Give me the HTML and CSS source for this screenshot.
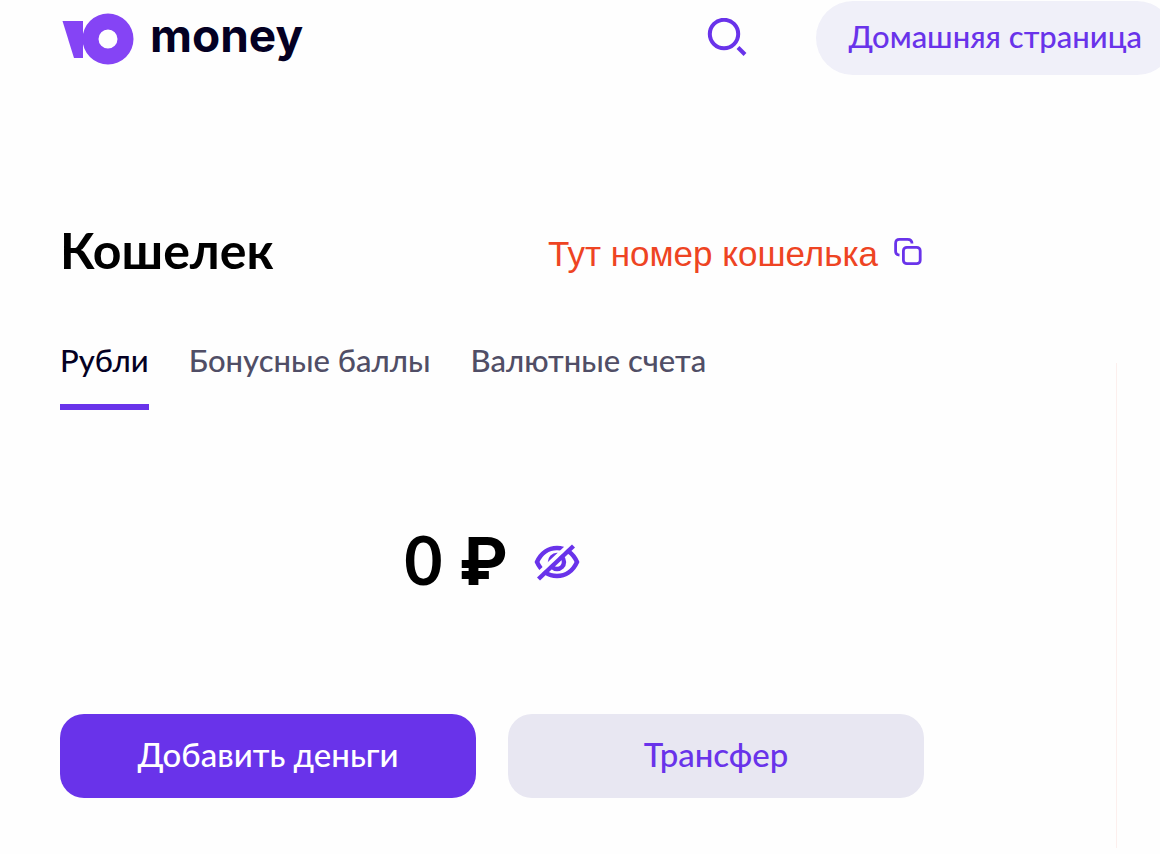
FILE: index.html
```html
<!DOCTYPE html>
<html lang="ru">
<head>
  <meta charset="UTF-8">
  <meta name="viewport" content="width=device-width, initial-scale=1.0">
  <title>Кошелек</title>
  <link rel="stylesheet" href="styles.css">
</head>
<body>

  <header class="header">
    <a class="logo" href="#">
      <svg class="logo-mark" viewBox="0 0 72 52" aria-hidden="true">
        <path d="M0.5 8H21V45H12Z" fill="#8544f5"/>
        <path fill-rule="evenodd" d="M46 0.5a25.5 25.5 0 1 1 0 51a25.5 25.5 0 1 1 0-51zM46 16.5a9.5 9.5 0 1 0 0 19a9.5 9.5 0 1 0 0-19z" fill="#8544f5"/>
      </svg>
      <span class="logo-text">money</span>
    </a>
    <button class="icon-button search" type="button" aria-label="Поиск">
      <svg width="40" height="40" viewBox="0 0 40 40" fill="none" stroke="#6933ea" stroke-width="4">
        <circle cx="17" cy="16" r="14.2"/>
        <path d="M31 29.5L38 36.5"/>
      </svg>
    </button>
    <a class="home-link" href="#">Домашняя страница</a>
  </header>

  <div class="page">
    <main class="wallet">
      <div class="wallet-head">
        <h1 class="wallet-title">Кошелек</h1>
        <div class="wallet-number">
          <span class="number-text">Тут номер кошелька</span>
          <button class="icon-button copy" type="button" aria-label="Скопировать">
            <svg width="30" height="30" viewBox="0 0 30 30" fill="none" stroke="#6933ea" stroke-width="2.8">
              <rect x="9.4" y="10.3" width="16.8" height="16.4" rx="3.5"/>
              <path d="M5.5 18.2C3 18 1.6 16.5 1.6 14V6.5C1.6 3.5 3 2.3 5.5 2.3H13.5C16.5 2.3 18 3.5 18 6.5"/>
            </svg>
          </button>
        </div>
      </div>

      <nav class="tabs">
        <a class="tab active" href="#">Рубли</a>
        <a class="tab" href="#">Бонусные баллы</a>
        <a class="tab" href="#">Валютные счета</a>
      </nav>

      <div class="balance">
        <span class="balance-sum">0 ₽</span>
        <button class="icon-button eye" type="button" aria-label="Скрыть баланс">
          <svg width="46" height="38" viewBox="0 0 46 38" fill="none" stroke="#6933ea" stroke-width="4.4">
            <path d="M3 19C7 10 14.5 5 23 5S39 10 43 19C39 28 31.5 33 23 33S7 28 3 19Z"/>
            <circle cx="23" cy="19" r="7"/>
            <path d="M1.5 33.5L36.5 0.5" stroke="#fefefe" stroke-width="4"/>
            <path d="M4.5 36L39.5 3"/>
          </svg>
        </button>
      </div>

      <div class="actions">
        <button class="button button-primary" type="button">Добавить деньги</button>
        <button class="button button-secondary" type="button">Трансфер</button>
      </div>
    </main>
    <aside class="side"></aside>
  </div>

</body>
</html>
```
FILE: styles.css
```css
* {
  box-sizing: border-box;
}

body {
  margin: 0;
  font-family: Lato, Inter, "Liberation Sans", sans-serif;
  color: #000;
  background-color: #fefefe;
  overflow-x: hidden;
}

.header {
  display: flex;
  align-items: center;
  padding: 1px 0 0 62px;
  margin-right: -14px;
}

.logo {
  display: flex;
  align-items: center;
  gap: 16px;
  margin-right: auto;
  padding-top: 2px;
  color: #040023;
  text-decoration: none;
}

.logo-mark {
  width: 72px;
  height: 52px;
}

.logo-text {
  padding-bottom: 8px;
  font-family: Inter, "Liberation Sans", sans-serif;
  font-size: 46px;
  font-weight: 700;
  line-height: 60px;
}

.icon-button {
  display: flex;
  padding: 0;
  border: none;
  background: none;
  cursor: pointer;
}

.search {
  margin-right: 69px;
}

.home-link {
  flex: none;
  padding: 0 32px 4px;
  border-radius: 37px;
  font-size: 31px;
  font-weight: 500;
  line-height: 70px;
  color: #6933ea;
  background-color: #f0f0f9;
  text-decoration: none;
  white-space: nowrap;
}

.page {
  display: flex;
  padding: 144px 0 56px 60px;
}

.wallet {
  flex: 1;
  margin-right: 192px;
}

.wallet-head {
  display: flex;
  align-items: center;
  justify-content: space-between;
}

.wallet-title {
  margin: 0;
  padding-bottom: 2px;
  font-size: 50px;
  font-weight: 700;
  line-height: 62px;
}

.wallet-number {
  display: flex;
  align-items: center;
  gap: 16px;
}

.number-text {
  padding-top: 6px;
  font-family: "Liberation Sans", Arial, sans-serif;
  font-size: 35px;
  line-height: 48px;
  color: #ee4423;
}

.copy {
  padding-top: 2px;
}

.tabs {
  display: flex;
  gap: 40px;
  margin-top: 57px;
}

.tab {
  padding-bottom: 24px;
  border-bottom: 6px solid transparent;
  font-size: 31px;
  font-weight: 500;
  line-height: 40px;
  color: #504e66;
  text-decoration: none;
  white-space: nowrap;
}

.tab.active {
  color: #040023;
  border-color: #6933ea;
}

.balance {
  display: flex;
  align-items: center;
  justify-content: center;
  gap: 26px;
  margin-top: 110px;
}

.balance-sum {
  font-size: 66px;
  font-weight: 700;
  line-height: 80px;
}

.eye {
  padding-top: 4px;
}

.actions {
  display: grid;
  grid-template-columns: 1fr 1fr;
  gap: 32px;
  margin-top: 114px;
}

.button {
  height: 84px;
  padding: 0 16px 4px;
  border: none;
  border-radius: 24px;
  font-family: inherit;
  font-size: 33px;
  font-weight: 500;
  cursor: pointer;
}

.button-primary {
  color: #fff;
  background-color: #6933ea;
}

.button-secondary {
  color: #6933ea;
  background-color: #e8e7f2;
}

.side {
  width: 44px;
  margin-top: 144px;
  margin-bottom: -50px;
  background: linear-gradient(#fcefed, #fcefed) left / 1px 100% no-repeat;
}
```
